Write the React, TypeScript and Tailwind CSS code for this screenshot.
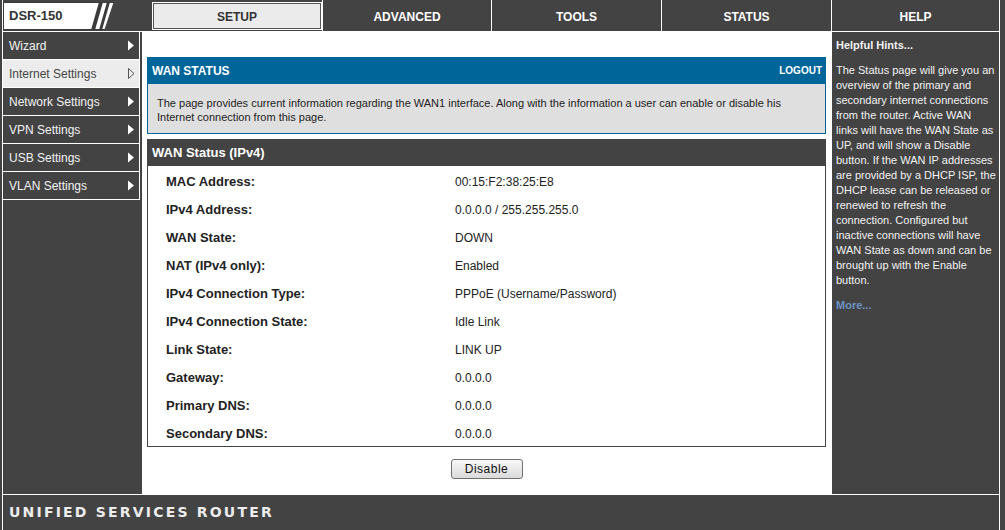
const tabs = ["ADVANCED", "TOOLS", "STATUS", "HELP"];
const tabWidths = ["w-[169px]", "w-[170px]", "w-[170px]", "w-[168px]"];

const menu = [
  "Wizard",
  "Internet Settings",
  "Network Settings",
  "VPN Settings",
  "USB Settings",
  "VLAN Settings",
];

const rows: [string, string][] = [
  ["MAC Address:", "00:15:F2:38:25:E8"],
  ["IPv4 Address:", "0.0.0.0 / 255.255.255.0"],
  ["WAN State:", "DOWN"],
  ["NAT (IPv4 only):", "Enabled"],
  ["IPv4 Connection Type:", "PPPoE (Username/Password)"],
  ["IPv4 Connection State:", "Idle Link"],
  ["Link State:", "LINK UP"],
  ["Gateway:", "0.0.0.0"],
  ["Primary DNS:", "0.0.0.0"],
  ["Secondary DNS:", "0.0.0.0"],
];

const hints = [
  "The Status page will give you an",
  "overview of the primary and",
  "secondary internet connections",
  "from the router. Active WAN",
  "links will have the WAN State as",
  "UP, and will show a Disable",
  "button. If the WAN IP addresses",
  "are provided by a DHCP ISP, the",
  "DHCP lease can be released or",
  "renewed to refresh the",
  "connection. Configured but",
  "inactive connections will have",
  "WAN State as down and can be",
  "brought up with the Enable",
  "button.",
];

function Logo() {
  return (
    <div className="relative mt-[2px] h-[28px] w-[112px]">
      <svg width="112" height="28" viewBox="0 0 112 28" className="absolute inset-0">
        <polygon points="0.5,0.5 111,0.5 102,27.5 0.5,27.5" fill="#fff" stroke="#3a3a3a" strokeWidth="1" />
        <polygon points="96,0 100,0 92,28 88,28" fill="#3a3a3a" />
        <polygon points="104,0 107,0 99,28 96,28" fill="#3a3a3a" />
      </svg>
      <span className="absolute left-[6px] top-[6px] text-[13px] font-bold leading-[16px] text-[#333]">
        DSR-150
      </span>
    </div>
  );
}

function Arrow({ active }: { active: boolean }) {
  return active ? (
    <svg width="7" height="11" viewBox="0 0 7 11">
      <polygon points="0.5,0.5 6,5.5 0.5,10.5" fill="none" stroke="#555" strokeWidth="1" />
    </svg>
  ) : (
    <svg width="7" height="11" viewBox="0 0 7 11">
      <polygon points="0,0.5 6,5.5 0,10.5" fill="#fff" />
    </svg>
  );
}

export default function App() {
  return (
    <div className="flex h-[530px] w-[1005px] overflow-hidden bg-[#434343] font-['Liberation_Sans',Arial,sans-serif]">
      <div className="ml-[2px] flex w-[998px] flex-col border-x border-white">
        {/* top tabs */}
        <div className="flex h-[31px] shrink-0">
          <div className="w-[149px]">
            <Logo />
          </div>
          <div className="w-[170px] pt-[2px] pb-[1px]">
            <div className="flex h-[28px] items-center justify-center border border-white bg-[#ebebeb] pt-[1px] text-[12px] font-bold text-[#333] shadow-[inset_0_0_0_1px_#555]">
              SETUP
            </div>
          </div>
          {tabs.map((t, i) => (
            <div
              key={t}
              className={`${tabWidths[i]} flex items-center justify-center border-l border-white pt-[2px] text-[12px] font-bold text-white`}
            >
              {t}
            </div>
          ))}
        </div>
        <div className="h-px shrink-0 bg-white" />

        {/* body */}
        <div className="flex h-[462px] shrink-0">
          {/* side menu */}
          <div className="w-[139px] shrink-0">
            {menu.map((m) => {
              const active = m === "Internet Settings";
              return (
                <div
                  key={m}
                  className={`flex h-[28px] w-[137px] items-center justify-between border-r border-b border-white pl-[6px] pr-[4px] text-[12px] ${
                    active ? "bg-[#ececec] text-[#444]" : "text-[#f2f2f2]"
                  }`}
                >
                  <span>{m}</span>
                  <Arrow active={active} />
                </div>
              );
            })}
          </div>

          {/* main content */}
          <div className="flex w-[689px] shrink-0 flex-col bg-white px-[5px] pt-[25px]">
            <div className="flex h-[27px] items-center justify-between bg-[#006699] pl-[5px] pr-[4px] text-white">
              <span className="text-[12px] font-bold">WAN STATUS</span>
              <span className="text-[10px] font-bold">LOGOUT</span>
            </div>
            <div className="border-x border-b border-[#006699] bg-[#dfdfdf] pt-[12px] pb-[9px] pl-[9px] text-[11px] leading-[14px] text-[#222]">
              The page provides current information regarding the WAN1 interface. Along with the information a user can enable or disable his
              <br />
              Internet connection from this page.
            </div>

            <div className="mt-[5px] flex h-[27px] items-center bg-[#434343] pl-[5px] pt-[1px] text-[13px] font-bold text-white">
              WAN Status (IPv4)
            </div>
            <div className="border-x border-b border-[#434343] bg-white">
              {rows.map(([k, v]) => (
                <div key={k} className="flex h-[28px] items-center pt-[3px] text-[12px] text-[#222]">
                  <div className="w-[307px] pl-[18px] text-[13px] font-bold">{k}</div>
                  <div>{v}</div>
                </div>
              ))}
            </div>

            <div className="mt-[12px] flex justify-center">
              <button
                type="button"
                className="h-[20px] w-[72px] rounded-[3px] border border-[#707070] bg-gradient-to-b from-[#f8f8f8] to-[#dadada] text-[12px] tracking-[0.5px] text-[#111]"
              >
                Disable
              </button>
            </div>
          </div>

          {/* hints */}
          <div className="w-[168px] shrink-0 border-l border-white bg-[#434343] pl-[4px] pt-[6px] text-[11px] leading-[15px] text-[#f2f2f2]">
            <div className="font-bold">Helpful Hints...</div>
            <div className="mt-[10px]">
              {hints.map((h) => (
                <div key={h} className="whitespace-nowrap">
                  {h}
                </div>
              ))}
            </div>
            <div className="mt-[10px] font-bold text-[#6d92c4]">More...</div>
          </div>
        </div>
        <div className="h-px shrink-0 bg-white" />

        {/* footer */}
        <div className="flex h-[35px] shrink-0 items-center pl-[6px]">
          <span className="font-['DejaVu_Sans',sans-serif] text-[14px] font-bold tracking-[2.2px] text-[#ececec]">
            UNIFIED SERVICES ROUTER
          </span>
        </div>
      </div>
    </div>
  );
}
